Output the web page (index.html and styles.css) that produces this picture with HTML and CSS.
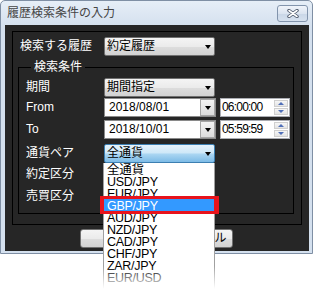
FILE: index.html
```html
<!DOCTYPE html>
<html lang="ja">

<head>
    <meta charset="UTF-8">
    <title>履歴検索条件の入力</title>
    <link rel="stylesheet" href="styles.css">
</head>

<body>
    <div class="window">
        <div class="titlebar">
            <span class="title">履歴検索条件の入力</span>
            <button class="close-btn" type="button">
                <svg width="12" height="9" viewBox="0 0 12 9">
                    <path d="M2 1.5 L10 7.5 M10 1.5 L2 7.5" stroke="#4b5668" stroke-width="3.4" stroke-linecap="round" fill="none" />
                    <path d="M2 1.5 L10 7.5 M10 1.5 L2 7.5" stroke="#ffffff" stroke-width="1.6" stroke-linecap="round" fill="none" />
                </svg>
            </button>
        </div>
        <div class="client">
            <div class="group">
                <div class="top-row">
                    <span class="label">検索する履歴</span>
                    <div class="combo"><span>約定履歴</span><span class="arrow"></span></div>
                </div>
                <fieldset class="conditions">
                    <legend>検索条件</legend>
                    <div class="form-grid">
                        <span class="label">期間</span>
                        <div class="controls">
                            <div class="combo"><span>期間指定</span><span class="arrow"></span></div>
                        </div>

                        <span class="label">From</span>
                        <div class="controls">
                            <div class="date-input"><span>2018/08/01</span><span class="drop-btn"><span class="arrow"></span></span></div>
                            <div class="time-input"><span>06:00:00</span><span class="spinner"><span class="spin"><span class="up"></span></span><span class="spin"><span class="down"></span></span></span></div>
                        </div>

                        <span class="label">To</span>
                        <div class="controls">
                            <div class="date-input"><span>2018/10/01</span><span class="drop-btn"><span class="arrow"></span></span></div>
                            <div class="time-input"><span>05:59:59</span><span class="spinner"><span class="spin"><span class="up"></span></span><span class="spin"><span class="down"></span></span></span></div>
                        </div>

                        <span class="label">通貨ペア</span>
                        <div class="controls">
                            <div class="combo focused">
                                <span>全通貨</span><span class="arrow"></span>
                                <ul class="dropdown-list">
                                    <li>全通貨</li>
                                    <li>USD/JPY</li>
                                    <li>EUR/JPY</li>
                                    <li class="selected">GBP/JPY</li>
                                    <li>AUD/JPY</li>
                                    <li>NZD/JPY</li>
                                    <li>CAD/JPY</li>
                                    <li>CHF/JPY</li>
                                    <li>ZAR/JPY</li>
                                    <li>EUR/USD</li>
                                </ul>
                            </div>
                        </div>

                        <span class="label">約定区分</span>
                        <div class="controls">
                            <div class="combo"><span></span><span class="arrow"></span></div>
                        </div>

                        <span class="label">売買区分</span>
                        <div class="controls">
                            <div class="combo"><span></span><span class="arrow"></span></div>
                        </div>
                    </div>
                </fieldset>
            </div>
            <div class="buttons">
                <button class="btn" type="button"></button>
                <button class="btn wide" type="button">キャンセル</button>
            </div>
        </div>
    </div>
</body>

</html>
```

FILE: styles.css
```css
html,
body {
    min-height: 290px;
}

body {
    margin: 0;
    background-color: #ffffff;
    font-family: "Liberation Sans", "Noto Sans CJK JP", sans-serif;
    font-size: 12px;
    line-height: 14px;
}

.window {
    width: 313px;
    height: 254px;
    box-sizing: border-box;
    border: 1px solid #7f8fa4;
    border-radius: 5px 5px 0 0;
    background: linear-gradient(#e6eef7, #d4e0ee 26px);
    padding: 0 3px 2px 4px;
}

.titlebar {
    height: 24px;
    display: flex;
    justify-content: space-between;
    align-items: flex-start;
    padding: 0 1px 0 2px;
}

.title {
    margin-top: 5px;
    color: #454545;
}

.close-btn {
    margin-top: 4px;
    width: 31px;
    height: 17px;
    box-sizing: border-box;
    border: 1px solid #8294ac;
    border-radius: 3px;
    background: linear-gradient(#f0f4fa, #dbe4f0 50%, #c9d6e7 51%, #d6e1ef);
    padding: 0;
    display: flex;
    align-items: center;
    justify-content: center;
}

.client {
    height: 226px;
    box-sizing: border-box;
    background-color: #262626;
    padding: 6px 0 0 7px;
}

.group {
    width: 290px;
    height: 194px;
    box-sizing: border-box;
    border: 1px solid #000000;
    padding: 5px 0 0 5px;
}

.label {
    color: #ffffff;
    line-height: 19px;
    white-space: nowrap;
}

.top-row {
    display: grid;
    grid-template-columns: 84px 111px;
    height: 19px;
    padding-left: 2px;
}

.conditions {
    width: 276px;
    min-width: 0;
    box-sizing: border-box;
    margin: 4px 0 0 0;
    border: 1px solid #000000;
    padding: 4px 0 7px 7px;
}

.conditions legend {
    color: #ffffff;
    padding: 0 3px;
    margin-left: 5px;
    line-height: 14px;
}

.form-grid {
    display: grid;
    grid-template-columns: 78px auto;
    grid-template-rows: 20px 22px 24px 21px 22px 19px;
}

.controls {
    display: flex;
    gap: 4px;
    align-items: flex-start;
}

.combo {
    width: 111px;
    height: 19px;
    box-sizing: border-box;
    border: 1px solid #707070;
    border-radius: 2px;
    background: linear-gradient(#f4f4f4, #ebebeb 50%, #dddddd 51%, #d2d2d2);
    padding: 0 3px 0 2px;
    display: flex;
    justify-content: space-between;
    align-items: center;
    color: #000000;
    line-height: 17px;
}

.arrow {
    width: 0;
    height: 0;
    border-left: 3.5px solid transparent;
    border-right: 3.5px solid transparent;
    border-top: 4px solid #000000;
}

.combo.focused {
    position: relative;
    border-color: #3c7fb1;
    background: linear-gradient(#e6f3fc, #cfe8f8 45%, #a9d5f2 55%, #7dbbe6);
}

.date-input {
    width: 112px;
    height: 19px;
    box-sizing: border-box;
    border: 1px solid #8a8a8a;
    background-color: #ffffff;
    display: flex;
    justify-content: space-between;
    padding-left: 4px;
    line-height: 17px;
}

.drop-btn {
    width: 15px;
    height: 17px;
    box-sizing: border-box;
    border: 1px solid #a5a5a5;
    background: linear-gradient(#f2f2f2, #dcdcdc);
    display: flex;
    align-items: center;
    justify-content: center;
}

.time-input {
    width: 70px;
    height: 19px;
    box-sizing: border-box;
    border: 1px solid #abadb3;
    background-color: #ffffff;
    display: flex;
    justify-content: space-between;
    padding: 0 1px 0 1px;
    line-height: 17px;
    letter-spacing: -0.8px;
}

.spinner {
    width: 14px;
    display: flex;
    flex-direction: column;
    padding: 1px 0;
    gap: 1px;
}

.spin {
    flex: 1;
    border: 1px solid #cfcfcf;
    background: linear-gradient(#f6f6f6, #e4e4e4);
    display: flex;
    align-items: center;
    justify-content: center;
}

.up,
.down {
    width: 0;
    height: 0;
    border-left: 3px solid transparent;
    border-right: 3px solid transparent;
}

.up {
    border-bottom: 3px solid #4f6fb8;
}

.down {
    border-top: 3px solid #4f6fb8;
}

.dropdown-list {
    position: absolute;
    top: 18px;
    left: -2px;
    width: 112px;
    height: 127px;
    box-sizing: border-box;
    margin: 0;
    padding: 0;
    list-style: none;
    background-color: #ffffff;
    border: 1px solid #a0a0a0;
    border-top: none;
    border-bottom: none;
    z-index: 5;
}

.dropdown-list li {
    height: 12px;
    line-height: 12px;
    padding: 1px 0 0 3px;
    box-sizing: border-box;
    font-size: 12.5px;
    letter-spacing: -0.3px;
    color: #000000;
    white-space: nowrap;
}

.dropdown-list .selected {
    position: relative;
    background-color: #3399ff;
    color: #ffffff;
}

.dropdown-list .selected::after {
    content: '';
    position: absolute;
    top: -3px;
    bottom: -3px;
    left: -4px;
    right: -5px;
    border-style: solid;
    border-color: #e8141c;
    border-width: 3px 5px 3px 4px;
}

.dropdown-list::after {
    content: '';
    position: absolute;
    left: -1px;
    right: -1px;
    bottom: 0;
    height: 24px;
    background: linear-gradient(rgba(255, 255, 255, 0), #ffffff 95%);
}

.buttons {
    display: flex;
    gap: 8px;
    margin-top: 4px;
    padding-left: 68px;
}

.btn {
    width: 72px;
    height: 19px;
    box-sizing: border-box;
    border: 1px solid #707070;
    border-radius: 3px;
    background: linear-gradient(#f4f4f4, #ebebeb 50%, #dddddd 51%, #d2d2d2);
    font: inherit;
    line-height: 17px;
    padding: 0;
    color: #000000;
}

.btn.wide {
    width: 73px;
}
```
